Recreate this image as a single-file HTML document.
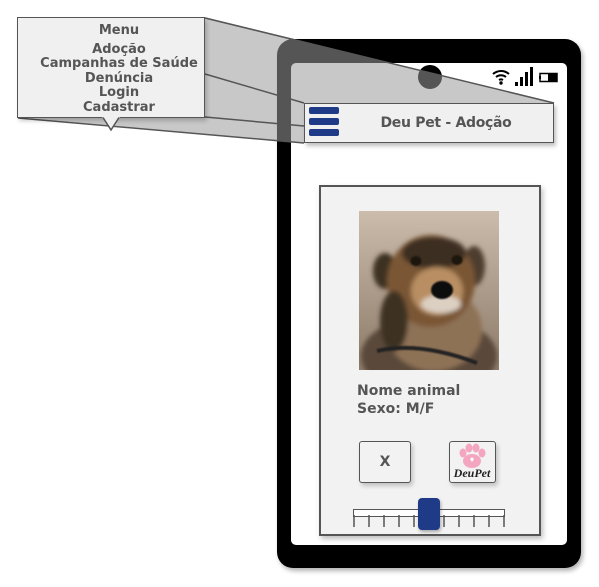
<!DOCTYPE html>
<html><head><meta charset="utf-8"><style>
html,body{margin:0;padding:0;background:#fff;width:599px;height:587px;overflow:hidden;position:relative;font-family:"DejaVu Sans","Liberation Sans",sans-serif;}
.abs{position:absolute;}
</style></head><body>
<div class="abs" style="left:277px;top:39px;width:304px;height:529px;background:#000;border-radius:16px;box-shadow:2px 3px 5px rgba(0,0,0,.3)"></div>
<div class="abs" style="left:291px;top:63px;width:276px;height:482px;background:#fff;border-radius:5px"></div>
<div class="abs" style="left:418px;top:65px;width:24px;height:24px;background:#000;border-radius:50%"></div>
<svg class="abs" style="left:490px;top:64px" width="75" height="28" viewBox="0 0 75 28">
 <path d="M3 10 A12 12 0 0 1 19 10" stroke="#000" stroke-width="2" fill="none"/>
 <path d="M6 13 A8 8 0 0 1 16 13" stroke="#000" stroke-width="2" fill="none"/>
 <path d="M9 16 A4 4 0 0 1 13 16" stroke="#000" stroke-width="2" fill="none"/>
 <circle cx="11" cy="19" r="1.7" fill="#000"/>
 <rect x="25" y="18" width="3" height="4" fill="#000"/>
 <rect x="30" y="13" width="3" height="9" fill="#000"/>
 <rect x="35" y="8" width="3" height="14" fill="#000"/>
 <rect x="40" y="3" width="3" height="19" fill="#000"/>
 <rect x="50" y="9.5" width="17" height="8" fill="#fff" stroke="#000" stroke-width="1.5"/>
 <rect x="49" y="12" width="2" height="3" fill="#000"/>
 <rect x="58" y="10" width="9" height="7" fill="#000"/>
</svg>
<svg class="abs" style="left:0;top:0" width="599" height="587">
 <polygon points="17,17 205,17 554,103 554,143 304,143 17,117" fill="rgba(155,155,155,0.55)"/>
 <g stroke="#555" stroke-width="1.5" fill="none">
  <line x1="205" y1="18" x2="554" y2="103"/>
  <line x1="205" y1="74" x2="304" y2="103"/>
  <line x1="205" y1="117" x2="304" y2="126"/>
  <line x1="18" y1="118" x2="304" y2="143"/>
 </g>
</svg>
<div class="abs" style="left:304px;top:103px;width:248px;height:38px;background:#f0f0f0;border:1.5px solid #555;box-shadow:2px 3px 4px rgba(0,0,0,.25)"></div>
<div class="abs" style="left:309px;top:107px;width:30px;height:7px;background:#1f3a86;border-radius:2px"></div>
<div class="abs" style="left:309px;top:118px;width:30px;height:7px;background:#1f3a86;border-radius:2px"></div>
<div class="abs" style="left:309px;top:129px;width:30px;height:7px;background:#1f3a86;border-radius:2px"></div>
<div class="abs" style="left:360px;top:115px;width:172px;text-align:center;font-size:14px;font-weight:bold;color:#555;letter-spacing:-0.3px">Deu Pet - Adoção</div>
<div class="abs" style="left:17px;top:17px;width:186px;height:99px;background:#f0f0f0;border:1.5px solid #555;box-shadow:2px 3px 4px rgba(0,0,0,.2)"></div>
<svg class="abs" style="left:100px;top:116px" width="24" height="16"><polygon points="2,1 20,1 11,14" fill="#f0f0f0"/><polyline points="3,1.5 11,14 19,1.5" fill="none" stroke="#555" stroke-width="1.5"/></svg>
<div class="abs" style="left:25px;top:24px;width:188px;text-align:center;font-size:13px;font-weight:bold;color:#555;line-height:14.6px">
 <div style="margin-bottom:4px">Menu</div>
 <div>Adoção</div><div>Campanhas de Saúde</div><div>Denúncia</div><div>Login</div><div>Cadastrar</div>
</div>
<div class="abs" style="left:319px;top:185px;width:218px;height:347px;background:#f2f2f2;border:2px solid #555;box-shadow:2px 3px 5px rgba(0,0,0,.25)"></div>
<svg class="abs" style="left:359px;top:211px" width="140" height="159" viewBox="0 0 140 159">
 <defs>
  <filter id="b" x="-20%" y="-20%" width="140%" height="140%"><feGaussianBlur stdDeviation="2.5"/></filter>
  <filter id="s"><feGaussianBlur stdDeviation="0.8"/></filter>
  <linearGradient id="bg" x1="0" y1="0" x2="0" y2="1"><stop offset="0" stop-color="#cbbcac"/><stop offset="1" stop-color="#8d7a68"/></linearGradient>
 </defs>
 <rect width="140" height="159" fill="url(#bg)"/>
 <g filter="url(#b)">
  <ellipse cx="70" cy="145" rx="68" ry="40" fill="#5a4a3a"/>
  <ellipse cx="75" cy="118" rx="48" ry="42" fill="#8e7256"/>
  <ellipse cx="26" cy="60" rx="12" ry="18" fill="#3e3024"/>
  <ellipse cx="115" cy="55" rx="11" ry="20" fill="#4e3e2e"/>
  <ellipse cx="72" cy="70" rx="44" ry="46" fill="#7a5636"/>
  <ellipse cx="75" cy="42" rx="32" ry="16" fill="#3e2e20"/>
  <ellipse cx="78" cy="80" rx="26" ry="24" fill="#b88e62"/>
  <ellipse cx="82" cy="93" rx="20" ry="9" fill="#dcd0c2"/>
  <ellipse cx="35" cy="110" rx="14" ry="30" fill="#3e3024"/>
 </g>
 <g filter="url(#s)">
  <ellipse cx="57" cy="50" rx="5.5" ry="5" fill="#1e120a"/>
  <ellipse cx="98" cy="49" rx="5.5" ry="5" fill="#1e120a"/>
  <ellipse cx="83" cy="79" rx="11" ry="9" fill="#111"/>
  <path d="M18 140 Q60 130 118 152" stroke="#222" stroke-width="4" fill="none"/>
 </g>
</svg>
<div class="abs" style="left:357px;top:382px;font-size:14px;font-weight:bold;color:#555;line-height:18px">Nome animal<br>Sexo: M/F</div>
<div class="abs" style="left:359px;top:441px;width:50px;height:40px;border:1.5px solid #555;border-radius:3px;background:#f2f2f2;box-shadow:2px 3px 4px rgba(0,0,0,.2);text-align:center;line-height:40px;font-size:14px;font-weight:bold;color:#555">X</div>
<div class="abs" style="left:449px;top:441px;width:45px;height:40px;border:1.5px solid #555;border-radius:3px;background:#f2f2f2;box-shadow:2px 3px 4px rgba(0,0,0,.2)"></div>
<svg class="abs" style="left:451px;top:443px" width="42" height="38">
 <g fill="#f4a6c0"><ellipse cx="21" cy="18" rx="9" ry="7"/><ellipse cx="12" cy="10" rx="3.5" ry="4.5"/><ellipse cx="18" cy="5" rx="3.5" ry="4.5"/><ellipse cx="25" cy="5" rx="3.5" ry="4.5"/><ellipse cx="31" cy="10" rx="3.5" ry="4.5"/></g>
 <path d="M19 16 q2-3 2 0 q0-3 2 0 l-2 3z" fill="#fff"/>
 <text x="21" y="34" text-anchor="middle" font-family="Liberation Serif,serif" font-style="italic" font-weight="bold" font-size="12" fill="#222">DeuPet</text>
</svg>
<div class="abs" style="left:353px;top:509px;width:150px;height:6px;background:#fff;border:1.5px solid #555"></div>
<svg class="abs" style="left:353px;top:515px" width="153" height="14"><g stroke="#555" stroke-width="1.5"><line x1="1" y1="0" x2="1" y2="12"/><line x1="16" y1="0" x2="16" y2="12"/><line x1="31" y1="0" x2="31" y2="12"/><line x1="46" y1="0" x2="46" y2="12"/><line x1="61" y1="0" x2="61" y2="12"/><line x1="76" y1="0" x2="76" y2="12"/><line x1="91" y1="0" x2="91" y2="12"/><line x1="106" y1="0" x2="106" y2="12"/><line x1="121" y1="0" x2="121" y2="12"/><line x1="136" y1="0" x2="136" y2="12"/><line x1="151" y1="0" x2="151" y2="12"/></g></svg>
<div class="abs" style="left:418px;top:498px;width:22px;height:32px;background:#1f3a86;border-radius:4px;box-shadow:1px 2px 3px rgba(0,0,0,.3)"></div>
</body></html>
